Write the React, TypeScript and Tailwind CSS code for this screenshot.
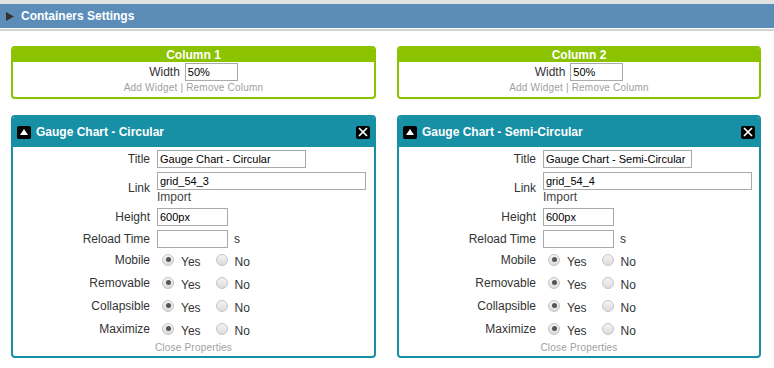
import React from "react";

type Widget = {
  title: string;
  link: string;
  height: string;
};

const columns: { name: string; width: string; widget: Widget }[] = [
  {
    name: "Column 1",
    width: "50%",
    widget: { title: "Gauge Chart - Circular", link: "grid_54_3", height: "600px" },
  },
  {
    name: "Column 2",
    width: "50%",
    widget: { title: "Gauge Chart - Semi-Circular", link: "grid_54_4", height: "600px" },
  },
];

const toggles = ["Mobile", "Removable", "Collapsible", "Maximize"];

function Radio({ checked }: { checked?: boolean }) {
  return (
    <span className="w-[12px] h-[12px] shrink-0 rounded-full border border-[#c4c4c4] bg-gradient-to-b from-[#f4f4f4] to-[#dcdcdc] flex items-center justify-center">
      {checked && <span className="w-[5px] h-[5px] rounded-full bg-[#555]" />}
    </span>
  );
}

function Input({ value, w }: { value: string; w: string }) {
  return (
    <div
      className={`${w} h-[18px] border border-[#a9a9a9] bg-white px-[2px] text-[11px] leading-[16px] text-black whitespace-nowrap overflow-hidden`}
    >
      {value}
    </div>
  );
}

function Row({
  label,
  children,
  className = "py-[2px]",
}: {
  label: string;
  children: React.ReactNode;
  className?: string;
}) {
  return (
    <div className={`flex items-center gap-[7px] ${className}`}>
      <div className="w-[137px] shrink-0 text-right text-[12px]">{label}</div>
      <div className="flex-1">{children}</div>
    </div>
  );
}

function WidgetBox({ widget }: { widget: Widget }) {
  return (
    <div className="mt-[16px] border-2 border-[#178fa5] rounded-[4px] overflow-hidden">
      <div className="h-[30px] bg-[#178fa5] flex items-center px-[4px] gap-[5px]">
        <span className="w-[14px] h-[13px] bg-black rounded-[2px] flex items-center justify-center">
          <svg width="8" height="6" viewBox="0 0 8 6">
            <path d="M4 0 L8 6 L0 6 Z" fill="#fff" />
          </svg>
        </span>
        <span className="flex-1 text-white font-bold text-[12px]">{widget.title}</span>
        <span className="w-[14px] h-[13px] bg-black rounded-[2px] flex items-center justify-center">
          <svg width="10" height="10" viewBox="0 0 10 10">
            <path d="M1 1 L9 9 M9 1 L1 9" stroke="#fff" strokeWidth="1.7" />
          </svg>
        </span>
      </div>
      <div className="pb-[1px]">
        <Row label="Title" className="pt-[3px] pb-[2px]">
          <Input value={widget.title} w="w-[149px]" />
        </Row>
        <Row label="Link">
          <Input value={widget.link} w="w-[209px]" />
          <div className="text-[12px] leading-[14px] text-[#444]">Import</div>
        </Row>
        <Row label="Height">
          <Input value={widget.height} w="w-[71px]" />
        </Row>
        <Row label="Reload Time" className="pt-[2px]">
          <div className="flex items-center gap-[6px]">
            <Input value="" w="w-[71px]" />
            <span className="text-[12px]">s</span>
          </div>
        </Row>
        {toggles.map((t) => (
          <div key={t} className="flex items-center h-[23px] gap-[7px]">
            <div className="w-[137px] shrink-0 text-right text-[12px]">{t}</div>
            <div className="flex items-center text-[12px] pl-[5px]">
              <Radio checked />
              <span className="ml-[7px] pt-[5px]">Yes</span>
              <span className="ml-[15px]">
                <Radio />
              </span>
              <span className="ml-[7px] pt-[5px]">No</span>
            </div>
          </div>
        ))}
        <div className="pt-[1px] text-center text-[10px] tracking-[0.2px] leading-[14px] text-[#a0a0a0]">
          Close Properties
        </div>
      </div>
    </div>
  );
}

export default function App() {
  return (
    <div className="w-[774px] h-[368px] bg-white overflow-hidden font-['Liberation_Sans',Arial,sans-serif] text-[#333]">
      <div className="h-[4px] bg-[#e2e2e2]" />
      <div className="h-[24px] bg-[#5b8db8] flex items-center pl-[6px] gap-[7px]">
        <svg width="8" height="9" viewBox="0 0 8 9">
          <path d="M0 0 L8 4.5 L0 9 Z" fill="#333" />
        </svg>
        <span className="text-white font-bold text-[12px]">Containers Settings</span>
      </div>
      <div className="mt-[1px] h-[2px] bg-[#d2d2d2]" />

      <div className="grid grid-cols-[365px_364px] gap-x-[21px] px-[11px] pt-[15px]">
        {columns.map((c) => (
          <div key={c.name}>
            <div className="border-2 border-[#8cc300] rounded-[4px] overflow-hidden">
              <div className="h-[14px] bg-[#8cc300] text-center text-white font-bold text-[12px] leading-[14px]">
                {c.name}
              </div>
              <div className="pt-[1px] pb-[2px]">
                <div className="flex justify-center items-center gap-[5px] text-[12px]">
                  <span>Width</span>
                  <Input value={c.width} w="w-[53px]" />
                </div>
                <div className="text-center text-[10px] tracking-[0.2px] leading-[14px] text-[#a0a0a0]">
                  Add Widget | Remove Column
                </div>
              </div>
            </div>
            <WidgetBox widget={c.widget} />
          </div>
        ))}
      </div>
    </div>
  );
}
